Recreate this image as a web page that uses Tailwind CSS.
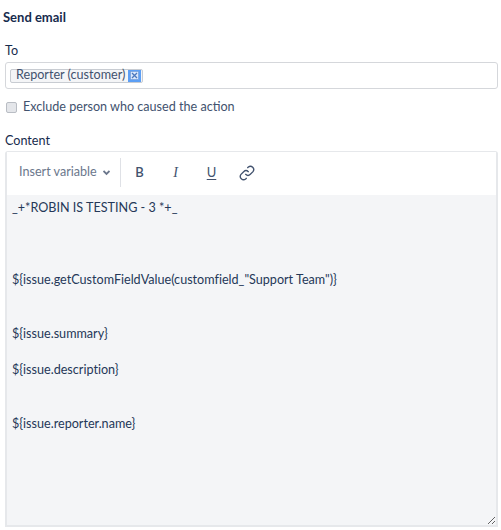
<!DOCTYPE html>
<html lang="en">
<head>
    <meta charset="UTF-8">
    <title>Send email</title>
    <script src="https://cdn.jsdelivr.net/npm/@tailwindcss/browser@4"></script>
</head>
<body class="bg-white font-['Lato',sans-serif] text-[12.6px] text-[#172b4d] overflow-hidden">
    <div class="w-[501px] h-[530px] pl-[5px] pr-[3px] pt-[9px]">
        <h2 class="font-bold text-[13px] leading-4 -ml-[2px]">Send email</h2>

        <!-- To -->
        <label class="block mt-[18px] leading-4 text-[#172b4d]">To</label>
        <div class="mt-[3px] h-[27px] border border-[#d5d7db] rounded-[3px] flex items-center pl-[4px]">
            <span class="flex items-center h-[14px] border border-[#c8ccd2] rounded-[2px] bg-[#f4f5f7] pl-[5px] pr-[1px] text-[#42526e] leading-none">
                Reporter (customer)
                <span class="ml-[3px] w-[13px] h-[12px] bg-[#5c9ff5] flex items-center justify-center">
                    <svg width="9" height="9" viewBox="0 0 9 9"><rect x="0.5" y="0.5" width="8" height="8" fill="#dbe8fb" stroke="#6f9ad6" stroke-width="0.6"/><path d="M2 2l5 5M7 2l-5 5" stroke="#4a78bd" stroke-width="1.3"/></svg>
                </span>
            </span>
        </div>

        <label class="flex items-center mt-[10px] h-4 text-[#42526e]">
            <span class="w-[11px] h-[11px] ml-px border border-[#b9bdc4] rounded-[2px] bg-[#e4e6ea]"></span>
            <span class="ml-[6px]">Exclude person who caused the action</span>
        </label>

        <!-- Content -->
        <label class="block mt-[18px] leading-4 text-[#172b4d]">Content</label>
        <div class="mt-[2px] border-2 border-t border-[#e6e8eb] rounded-t-[3px]">
            <div class="h-[43px] flex items-center bg-white pl-[12px] pb-[2px] text-[#6b778c]">
                <span class="w-[79px]">Insert variable</span>
                <svg class="ml-[5px]" width="7" height="6" viewBox="0 0 7 6"><path d="M0.5 1l3 3 3-3" fill="none" stroke="#6b778c" stroke-width="1.8"/></svg>
                <span class="ml-[10px] w-px h-[29px] bg-[#dfe1e6]"></span>
                <div class="flex items-center text-[#42526e]">
                    <span class="w-[19px] ml-[9px] text-center font-semibold text-[13px]">B</span>
                    <span class="w-[19px] ml-[17px] text-center italic font-['Liberation_Serif',serif] text-[14px]">I</span>
                    <span class="w-[19px] ml-[17px] text-center underline underline-offset-2 text-[13px]">U</span>
                    <svg class="ml-[18px]" width="16" height="16" viewBox="0 0 24 24" fill="none" stroke="#42526e" stroke-width="2" stroke-linecap="round"><path d="M10 14a5 5 0 0 0 7 0l4-4a5 5 0 0 0-7-7l-1 1"/><path d="M14 10a5 5 0 0 0-7 0l-4 4a5 5 0 0 0 7 7l1-1"/></svg>
                </div>
            </div>
            <textarea rows="18" class="block w-full h-[330px] bg-[#f4f5f7] pl-[5px] pt-[4px] leading-[18px] text-[#253858] outline-none [font-variant-ligatures:none]">_+*ROBIN IS TESTING - 3 *+_



${issue.getCustomFieldValue(customfield_"Support Team")}


${issue.summary}

${issue.description}


${issue.reporter.name}</textarea>
        </div>
    </div>
</body>
</html>
